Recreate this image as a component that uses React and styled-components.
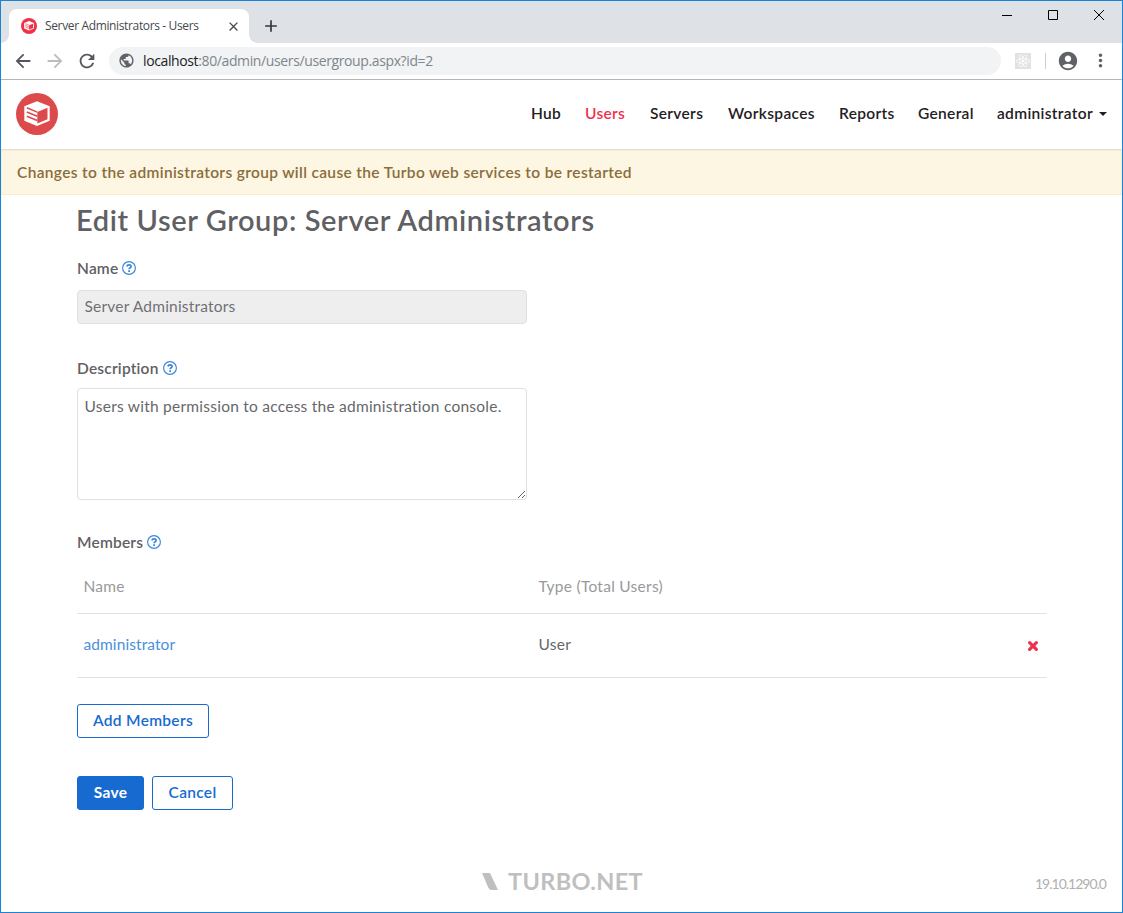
import React from "react";
import styled, { createGlobalStyle } from "styled-components";
import {
  MdArrowBack,
  MdArrowForward,
  MdRefresh,
  MdPublic,
  MdAccountCircle,
  MdMoreVert,
  MdAdd,
  MdClose,
} from "react-icons/md";
import { FaReact } from "react-icons/fa";

const GlobalStyle = createGlobalStyle`
  * { box-sizing: border-box; }
  body { margin: 0; background: #fff; overflow: hidden; }
  svg { display: block; flex: none; }
`;

const Window = styled.div`
  display: flex;
  flex-direction: column;
  width: 1123px;
  height: 913px;
  border: 1px solid #1883d7;
  background: #fff;
  color: #5f6064;
  font-family: Lato, "Liberation Sans", sans-serif;
  font-size: 15.5px;
`;

const TabStrip = styled.div`
  display: flex;
  height: 42px;
  background: #dee1e6;
  padding-left: 8px;
`;

const Tab = styled.div`
  position: relative;
  display: flex;
  align-items: center;
  width: 240px;
  height: 34px;
  margin-top: 8px;
  padding: 0 8px 0 12px;
  border-radius: 8px 8px 0 0;
  background: #fff;
  color: #45484c;
  &::before, &::after {
    content: "";
    position: absolute;
    bottom: 0;
    width: 8px;
    height: 8px;
  }
  &::before {
    left: -8px;
    background: radial-gradient(circle at 0 0, transparent 7.5px, #fff 8px);
  }
  &::after {
    right: -8px;
    background: radial-gradient(circle at 100% 0, transparent 7.5px, #fff 8px);
  }
`;

const TabTitle = styled.span`
  flex: 1;
  margin-left: 8px;
  font: 12px/18px "Open Sans", sans-serif;
  letter-spacing: -0.36px;
  white-space: nowrap;
`;

const NewTab = styled.div`
  display: flex;
  align-items: center;
  margin: 8px 0 0 12px;
  color: #33363a;
`;

const WindowControls = styled.div`
  display: flex;
  gap: 36px;
  margin: 9px 18px 0 auto;
`;

const Toolbar = styled.div`
  display: flex;
  align-items: center;
  height: 37px;
  padding: 0 11px 1px;
  border-bottom: 1px solid #b6b4b6;
  color: #5f6368;
`;

const ToolbarIcon = styled.span`
  display: flex;
  width: 22px;
  margin-right: 10px;
  color: ${(p) => (p.$dim ? "#babcbe" : "#54585d")};
`;

const AddressBar = styled.div`
  display: flex;
  align-items: center;
  gap: 8px;
  width: 892px;
  height: 28px;
  margin-left: 1px;
  padding-left: 9px;
  border-radius: 14px;
  background: #f1f3f4;
`;

const Url = styled.span`
  font: 14px/20px "Open Sans", sans-serif;
  letter-spacing: -0.38px;
  color: #80868b;
  b { font-weight: 400; color: #202124; }
`;

const Extension = styled.span`
  display: flex;
  align-items: center;
  justify-content: center;
  width: 16px;
  height: 16px;
  margin-left: 14px;
  background: #e2e2e2;
  color: #fff;
`;

const Separator = styled.span`
  width: 1px;
  height: 16px;
  margin: 0 11px 0 14px;
  background: #cdcfd2;
`;

const MenuDots = styled(MdMoreVert)`
  margin-left: auto;
`;

const Header = styled.header`
  display: flex;
  align-items: center;
  justify-content: space-between;
  height: 70px;
  padding: 0 15px 2px;
  border-bottom: 1px solid #dedfe1;
`;

const Nav = styled.nav`
  display: flex;
  align-items: center;
  gap: 24px;
  padding-bottom: 1px;
`;

const NavLink = styled.a`
  display: flex;
  align-items: center;
  width: ${(p) => p.$width}px;
  line-height: 20px;
  font-weight: 600;
  letter-spacing: 0.33px;
  white-space: nowrap;
  color: ${(p) => (p.$active ? "#f0304e" : "#1f2023")};
`;

const Caret = styled.i`
  margin: 2px 0 0 auto;
  border: 4px solid transparent;
  border-top-color: currentColor;
  border-bottom: 0;
`;

const Notice = styled.div`
  height: 45px;
  padding-left: 15px;
  border: 1px solid #faebcc;
  background: #fdf6e3;
  color: #8a6d3b;
  font-weight: 600;
  line-height: 43px;
  letter-spacing: 0.345px;
`;

const Content = styled.main`
  flex: 1;
  width: 970px;
  margin-left: 76px;
`;

const Title = styled.h1`
  margin: 0 0 0 -1px;
  font-size: 29px;
  font-weight: 600;
  line-height: 50px;
  letter-spacing: 0.6px;
  white-space: nowrap;
`;

const Label = styled.label`
  display: flex;
  align-items: center;
  gap: 4px;
  height: 20px;
  margin: ${(p) => p.$margin};
  font-weight: 600;
  letter-spacing: 0.2px;
`;

const Input = styled.input`
  display: block;
  width: 450px;
  height: 34px;
  padding: 0 6.5px 2px;
  border: 1px solid #e0e0e3;
  border-radius: 4px;
  background: #eee;
  color: #707175;
  font: inherit;
  letter-spacing: 0.2px;
`;

const TextArea = styled.textarea`
  display: block;
  width: 450px;
  height: 112px;
  padding: 6px 6.5px;
  border: 1px solid #dfdfe1;
  border-radius: 4px;
  background: #fff;
  color: #66676b;
  font: inherit;
  line-height: 22px;
  letter-spacing: 0.24px;
  outline: none;
`;

const Row = styled.div`
  display: grid;
  grid-template-columns: 455px 1fr auto;
  align-items: center;
  height: ${(p) => p.$height}px;
  padding: 0 8px ${(p) => (p.$head ? 2 : 4)}px 6.5px;
  border-bottom: 1px solid #e2e2e2;
  color: ${(p) => (p.$head ? "#98999c" : "#66676b")};
  letter-spacing: 0.27px;
  svg { margin-top: 5px; }
`;

const MemberLink = styled.a`
  color: #4a90d9;
  letter-spacing: 0.08px;
`;

const Actions = styled.div`
  display: flex;
  gap: 8px;
  margin-top: ${(p) => p.$top}px;
`;

const Button = styled.button`
  width: ${(p) => p.$width}px;
  height: 34px;
  padding: 0 0 2px;
  border: 1px solid #176bd0;
  border-radius: 3px;
  background: ${(p) => (p.$primary ? "#176bd0" : "#fff")};
  color: ${(p) => (p.$primary ? "#fff" : "#176bd0")};
  font: inherit;
  font-weight: ${(p) => (p.$primary ? 700 : 600)};
  letter-spacing: 0.3px;
`;

const Footer = styled.footer`
  display: grid;
  grid-template-columns: 1fr auto 1fr;
  align-items: center;
  height: 62px;
  padding: 0 14px;
  color: #bfbfbf;
`;

const Brand = styled.div`
  grid-column: 2;
  display: flex;
  align-items: center;
  gap: 10px;
  margin-left: 2px;
  font-size: 23.5px;
  font-weight: 700;
  line-height: 28px;
  letter-spacing: 0.35px;
`;

const Version = styled.span`
  justify-self: end;
  padding: 4px 2px 0 0;
  font-size: 14px;
  letter-spacing: -1px;
  color: #b0b0b0;
`;

function TurboLogo({ size, color }) {
  return (
    <svg width={size} height={size} viewBox="0 0 42 42">
      <circle cx="21" cy="21" r="21" fill={color} />
      <path d="M21 8.2 33.7 13.2V27.7L21 33 8.3 27.7V13.2Z" fill="#fff" />
      <path d="M21.3 18.9 31.5 14.8V26.2L21.3 30.6Z" fill={color} />
      <path
        d="M10.8 14.8 21.3 19.1M10.8 19 21.3 23.3M10.8 23.2 21.3 27.5"
        stroke={color}
        strokeWidth="1.5"
      />
    </svg>
  );
}

function HelpIcon() {
  return (
    <svg width="14" height="14" viewBox="0 0 14 14" fill="none" stroke="#3d86d9">
      <circle cx="7" cy="7" r="6.4" strokeWidth="1.15" />
      <path d="M4.9 5.5C5.1 4.2 6 3.8 7 3.8 8.3 3.8 9.1 4.5 9.1 5.4 9.1 6.8 7.1 6.7 7.1 8.3" strokeWidth="1.7" />
      <path d="M6.2 10.1H8" strokeWidth="1.7" />
    </svg>
  );
}

function RemoveIcon() {
  return (
    <svg width="12" height="12" viewBox="0 0 12 12">
      <path
        d="M2.6 2.6 9.4 9.4M9.4 2.6 2.6 9.4"
        stroke="#f0304e"
        strokeWidth="3.2"
        strokeLinecap="round"
      />
    </svg>
  );
}

const LINKS = [
  ["Hub", 30],
  ["Users", 41],
  ["Servers", 54],
  ["Workspaces", 87],
  ["Reports", 55],
  ["General", 55],
];

export default function App() {
  return (
    <Window>
      <GlobalStyle />
      <TabStrip>
        <Tab>
          <TurboLogo size={16} color="#ef3248" />
          <TabTitle>Server Administrators - Users</TabTitle>
          <MdClose size={15} />
        </Tab>
        <NewTab>
          <MdAdd size={20} />
        </NewTab>
        <WindowControls>
          <svg width="10" height="10" viewBox="0 0 10 10">
            <path d="M0 5.5H10" stroke="#000" />
          </svg>
          <svg width="10" height="10" viewBox="0 0 10 10">
            <path d="M.5 .5H9.5V9.5H.5Z" fill="none" stroke="#000" />
          </svg>
          <svg width="10" height="10" viewBox="0 0 10 10">
            <path d="M0 0 10 10M10 0 0 10" stroke="#000" />
          </svg>
        </WindowControls>
      </TabStrip>
      <Toolbar>
        <ToolbarIcon><MdArrowBack size={22} /></ToolbarIcon>
        <ToolbarIcon $dim><MdArrowForward size={22} /></ToolbarIcon>
        <ToolbarIcon><MdRefresh size={22} /></ToolbarIcon>
        <AddressBar>
          <MdPublic size={17} />
          <Url><b>localhost</b>:80/admin/users/usergroup.aspx?id=2</Url>
        </AddressBar>
        <Extension><FaReact size={14} /></Extension>
        <Separator />
        <MdAccountCircle size={22} />
        <MenuDots size={21} />
      </Toolbar>

      <Header>
        <TurboLogo size={42} color="#dc4a4c" />
        <Nav>
          {LINKS.map(([name, width]) => (
            <NavLink key={name} $width={width} $active={name === "Users"}>
              {name}
            </NavLink>
          ))}
          <NavLink $width={110}>
            administrator
            <Caret />
          </NavLink>
        </Nav>
      </Header>

      <Notice>
        Changes to the administrators group will cause the Turbo web services to be restarted
      </Notice>

      <Content>
        <Title>Edit User Group: Server Administrators</Title>

        <Label $margin="13px 0 12px">
          Name <HelpIcon />
        </Label>
        <Input defaultValue="Server Administrators" readOnly />

        <Label $margin="34px 0 10px">
          Description <HelpIcon />
        </Label>
        <TextArea
          spellCheck={false}
          defaultValue="Users with permission to access the administration console."
        />

        <Label $margin="32px 0 8px">
          Members <HelpIcon />
        </Label>
        <Row $head $height={54}>
          <span>Name</span>
          <span>Type (Total Users)</span>
        </Row>
        <Row $height={64}>
          <MemberLink>administrator</MemberLink>
          <span>User</span>
          <RemoveIcon />
        </Row>

        <Actions $top={26}>
          <Button $width={132}>Add Members</Button>
        </Actions>
        <Actions $top={38}>
          <Button $width={67} $primary>Save</Button>
          <Button $width={81}>Cancel</Button>
        </Actions>
      </Content>

      <Footer>
        <Brand>
          <svg width="16" height="17" viewBox="0 0 16 17">
            <path d="M0 0H8L16 17H9.5Q7.5 17 6.5 15Z" fill="currentColor" />
          </svg>
          TURBO.NET
        </Brand>
        <Version>19.10.1290.0</Version>
      </Footer>
    </Window>
  );
}
